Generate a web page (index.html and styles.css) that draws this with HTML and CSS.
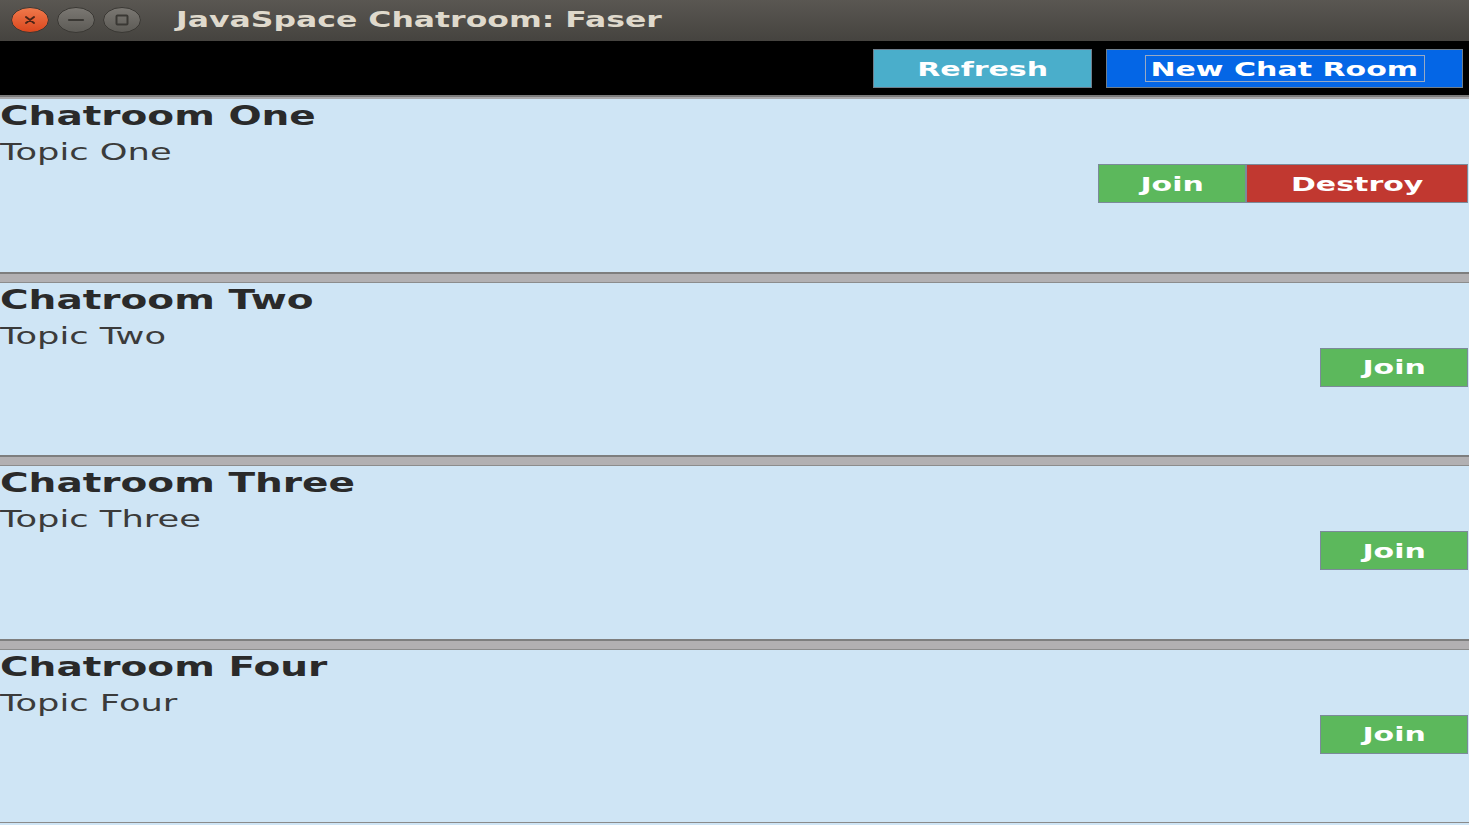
FILE: index.html
```html
<!DOCTYPE html>
<html lang="en">
<head>
<meta charset="utf-8">
<title>JavaSpace Chatroom: Faser</title>
<link rel="stylesheet" href="styles.css">
</head>
<body>
<div class="window">
  <header class="titlebar">
    <div class="controls">
      <svg class="ctl" width="38" height="26" viewBox="0 0 38 26">
        <defs>
          <linearGradient id="gc" x1="0" y1="0" x2="0" y2="1">
            <stop offset="0" stop-color="#f07a4c"/>
            <stop offset="1" stop-color="#d9461d"/>
          </linearGradient>
        </defs>
        <ellipse cx="19" cy="13" rx="18.5" ry="12.5" fill="url(#gc)" stroke="#3a3834" stroke-width="1"/>
        <path d="M15 10 L23 16 M23 10 L15 16" stroke="#4a2316" stroke-width="2" stroke-linecap="round"/>
      </svg>
      <svg class="ctl" width="38" height="26" viewBox="0 0 38 26">
        <defs>
          <linearGradient id="gg" x1="0" y1="0" x2="0" y2="1">
            <stop offset="0" stop-color="#7b7873"/>
            <stop offset="1" stop-color="#5c5a55"/>
          </linearGradient>
        </defs>
        <ellipse cx="19" cy="13" rx="18.5" ry="12.5" fill="url(#gg)" stroke="#3a3834" stroke-width="1"/>
        <path d="M12 13 H26" stroke="#3a3834" stroke-width="2.2" stroke-linecap="round"/>
      </svg>
      <svg class="ctl" width="38" height="26" viewBox="0 0 38 26">
        <ellipse cx="19" cy="13" rx="18.5" ry="12.5" fill="url(#gg)" stroke="#3a3834" stroke-width="1"/>
        <rect x="13.5" y="8.5" width="11" height="9" rx="1" fill="none" stroke="#3a3834" stroke-width="2"/>
      </svg>
    </div>
    <h1 class="wtitle"><span class="wide">JavaSpace Chatroom: Faser</span></h1>
  </header>

  <nav class="toolbar">
    <button class="btn btn-refresh"><span class="wide-c">Refresh</span></button>
    <button class="btn btn-new"><span class="focus"><span class="wide-c">New Chat Room</span></span></button>
  </nav>
  <div class="rule-top"></div>

  <main class="rooms">
    <section class="room">
      <h2 class="room-name"><span class="wide">Chatroom One</span></h2>
      <p class="room-topic"><span class="wide">Topic One</span></p>
      <div class="actions">
        <button class="btn btn-join"><span class="wide-c">Join</span></button>
        <button class="btn btn-destroy"><span class="wide-c">Destroy</span></button>
      </div>
    </section>
    <div class="divider"></div>
    <section class="room">
      <h2 class="room-name"><span class="wide">Chatroom Two</span></h2>
      <p class="room-topic"><span class="wide">Topic Two</span></p>
      <div class="actions">
        <button class="btn btn-join"><span class="wide-c">Join</span></button>
      </div>
    </section>
    <div class="divider"></div>
    <section class="room">
      <h2 class="room-name"><span class="wide">Chatroom Three</span></h2>
      <p class="room-topic"><span class="wide">Topic Three</span></p>
      <div class="actions">
        <button class="btn btn-join"><span class="wide-c">Join</span></button>
      </div>
    </section>
    <div class="divider"></div>
    <section class="room">
      <h2 class="room-name"><span class="wide">Chatroom Four</span></h2>
      <p class="room-topic"><span class="wide">Topic Four</span></p>
      <div class="actions">
        <button class="btn btn-join"><span class="wide-c">Join</span></button>
      </div>
    </section>
  </main>
  <div class="rule-bottom"></div>
</div>
</body>
</html>
```

FILE: styles.css
```css
* { box-sizing: border-box; }

html, body {
  margin: 0;
  padding: 0;
  width: 1469px;
  height: 825px;
  overflow: hidden;
  background: #cfe5f5;
  font-family: "DejaVu Sans", "Liberation Sans", sans-serif;
}

.window {
  display: flex;
  flex-direction: column;
  width: 1469px;
  height: 825px;
}

.wide {
  display: inline-block;
  transform: scaleX(1.5);
  transform-origin: left center;
  white-space: nowrap;
}

.wide-c {
  display: inline-block;
  transform: scaleX(1.5);
  transform-origin: center center;
  white-space: nowrap;
}

/* Title bar */
.titlebar {
  height: 41px;
  flex: none;
  display: flex;
  align-items: center;
  background: linear-gradient(#5a5752, #45433f);
  padding-left: 11px;
}

.controls {
  display: flex;
  gap: 8px;
  margin-top: -2px;
}

.ctl { display: block; }

.wtitle {
  margin: -2px 0 0 35px;
  font-size: 21px;
  font-weight: bold;
  color: #dfd9cc;
  line-height: 24px;
}

/* Toolbar */
.toolbar {
  height: 54px;
  flex: none;
  background: #000;
  display: flex;
  justify-content: flex-end;
  align-items: flex-start;
  padding: 8px 6px 0 0;
  gap: 14px;
}

.btn {
  font-family: "DejaVu Sans", "Liberation Sans", sans-serif;
  font-weight: bold;
  font-size: 20px;
  color: #fff;
  height: 39px;
  padding: 0;
  margin: 0;
  display: flex;
  align-items: center;
  justify-content: center;
  border: 1px solid #6f7e8c;
  cursor: pointer;
}

.btn-refresh {
  width: 219px;
  background: #4aaecb;
}

.btn-new {
  width: 357px;
  background: #0466e6;
}

.focus {
  display: flex;
  align-items: center;
  justify-content: center;
  width: 280px;
  height: 27px;
  border: 1px solid #97a9c4;
}

.rule-top {
  flex: none;
  height: 4px;
  border-top: 2px solid #7b7b7b;
  background: #a9a9ab;
}

/* Rooms */
.rooms {
  flex: 1;
  display: flex;
  flex-direction: column;
  min-height: 0;
}

.room {
  flex: 1;
  display: flex;
  flex-direction: column;
  padding-top: 2px;
  background: #cfe5f5;
}

.room-name {
  margin: 0;
  font-size: 26px;
  font-weight: bold;
  line-height: 30px;
  color: #2a2a2a;
}

.room-topic {
  margin: 8px 0 0;
  font-size: 23.5px;
  font-weight: normal;
  line-height: 26px;
  color: #3b3b3b;
}

.actions {
  display: flex;
  justify-content: flex-end;
  margin-top: -1px;
  padding-right: 1px;
}

.btn-join {
  width: 148px;
  background: #5cb85c;
  border-color: #7b8a99;
}

.btn-destroy {
  width: 222px;
  background: #c13830;
  border-color: #7b8a99;
}

.divider {
  flex: none;
  height: 11px;
  border-top: 2px solid #7e7e7e;
  border-bottom: 1px solid #8c8c8c;
  background: #b2b0b2;
}

.rule-bottom {
  flex: none;
  height: 3px;
  border-top: 1px solid #8a8a8a;
  background: #cfe5f5;
}
```
